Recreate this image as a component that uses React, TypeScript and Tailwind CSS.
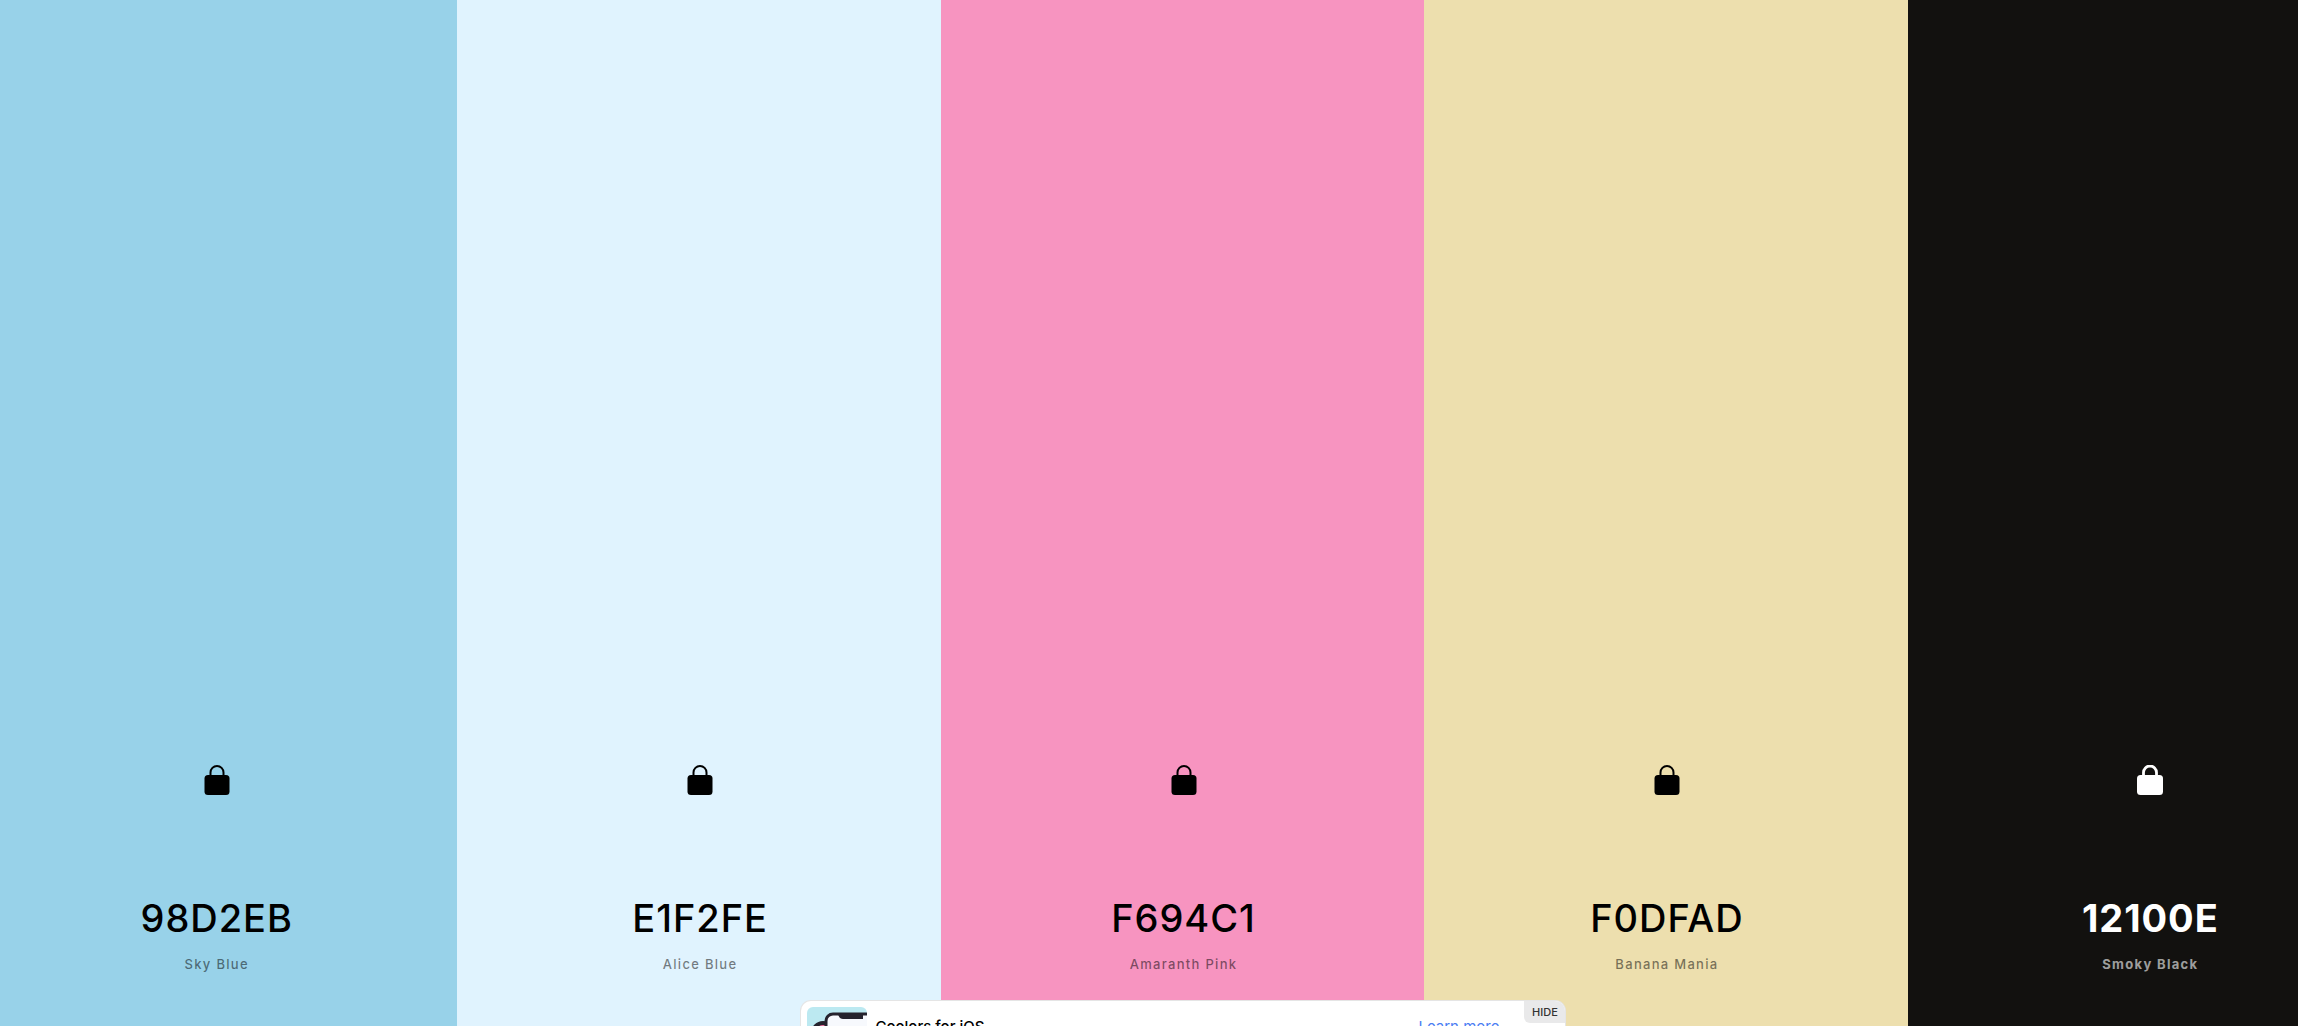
type Swatch = {
  hex: string;
  name: string;
  background: string;
  text: string;
  caption: string;
  light?: boolean;
};

const swatches: Swatch[] = [
  { hex: "98D2EB", name: "Sky Blue", background: "bg-[#98d2e9]", text: "text-black font-medium", caption: "text-black/50 font-medium" },
  { hex: "E1F2FE", name: "Alice Blue", background: "bg-[#e0f3fe]", text: "text-black font-medium", caption: "text-black/50 font-medium" },
  { hex: "F694C1", name: "Amaranth Pink", background: "bg-[#f794c0]", text: "text-black font-medium", caption: "text-black/50 font-medium" },
  { hex: "F0DFAD", name: "Banana Mania", background: "bg-[#eddfae]", text: "text-black font-medium", caption: "text-black/50 font-medium" },
  { hex: "12100E", name: "Smoky Black", background: "bg-[#12110f]", text: "text-white font-bold", caption: "text-white/60 font-bold", light: true },
];

function LockIcon({ light }: { light?: boolean }) {
  return (
    <svg viewBox="0 0 26 30" className="h-[30px] w-[26px]" aria-hidden="true">
      <path
        d="M6.5 12V7.500a6.500 6.500 0 0 1 13 0V12"
        fill="none"
        stroke="currentColor"
        strokeWidth={light ? 2.8 : 2}
      />
      <rect x={light ? 0 : 0.5} y="10" width={light ? 26 : 25} height="20" rx="3.5" fill="currentColor" />
    </svg>
  );
}

function SwatchColumn({ swatch }: { swatch: Swatch }) {
  return (
    <section
      className={`flex flex-1 basis-0 flex-col items-center justify-end pb-[52px] pl-0.5 ${swatch.background} ${swatch.text}`}
    >
      <button type="button" aria-label={`Lock ${swatch.name}`}>
        <LockIcon light={swatch.light} />
      </button>
      <button type="button" className="mt-[99px] text-[38px] leading-[48px] tracking-wide">
        {swatch.hex}
      </button>
      <button type="button" className={`mt-3 text-[13px] leading-5 tracking-widest ${swatch.caption}`}>
        {swatch.name}
      </button>
    </section>
  );
}

function PhoneArtwork() {
  return (
    <svg viewBox="0 0 60 60" className="size-[60px] rounded-md" aria-hidden="true">
      <rect width="60" height="60" fill="#bce9f1" />
      <circle cx="16" cy="26" r="10" fill="#ef6f9f" stroke="#25232d" strokeWidth="4" />
      <rect x="19" y="7" width="60" height="80" rx="7" fill="#f7f9fd" stroke="#25232d" strokeWidth="3" />
      <path d="M31 7h25v5H36q-4 0-5-5z" fill="#25232d" />
    </svg>
  );
}

function AppBanner() {
  return (
    <aside className="absolute top-full left-[calc(51.5%_-_383px)] -mt-[26px] flex w-[766px] items-start gap-2 overflow-hidden rounded-t-[11px] border border-black/10 bg-white p-[6px] text-black">
      <PhoneArtwork />
      <p className="mt-2 text-[15px] leading-6 font-medium">Coolors for iOS</p>
      <a href="#ios" className="mt-2 mr-[60px] ml-auto text-[15px] leading-6 text-[#4b7df3]">
        Learn more
      </a>
      <button
        type="button"
        className="absolute top-0 right-0 h-[22px] w-[41px] rounded-bl-md bg-[#e9e9ea] text-[11px] font-medium text-[#333]"
      >
        HIDE
      </button>
    </aside>
  );
}

export default function App() {
  return (
    <main className="relative h-screen overflow-hidden font-['Inter',sans-serif]">
      <div className="-ml-[26px] flex h-full w-[calc(100%_+_119px)]">
        {swatches.map((swatch) => (
          <SwatchColumn key={swatch.hex} swatch={swatch} />
        ))}
      </div>
      <AppBanner />
    </main>
  );
}
